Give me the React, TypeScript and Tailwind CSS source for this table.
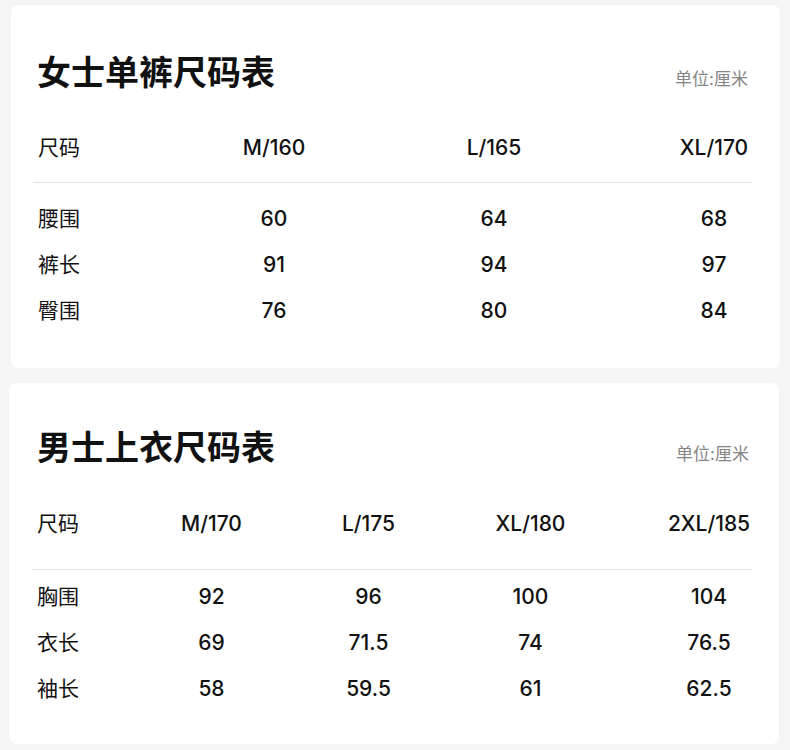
import React from "react";

const FONT = "font-['Inter','Noto_Sans_CJK_SC',sans-serif]";

function Card1() {
  const header = ["M/160", "L/165", "XL/170"];
  const rows: [string, string[]][] = [
    ["腰围", ["60", "64", "68"]],
    ["裤长", ["91", "94", "97"]],
    ["臀围", ["76", "80", "84"]],
  ];
  const grid = "grid grid-cols-[76px_120px_120px_120px] items-center gap-x-[100px] pl-[27px] text-[21px] text-[#111]";
  return (
    <div className="ml-[11px] w-[769px] rounded-[8px] bg-white pt-[48px] pb-[34px]">
      <div className="flex items-baseline justify-between pl-[26px] pr-[32px]">
        <div className="text-[34px] font-semibold leading-[40px] text-[#111]">女士单裤尺码表</div>
        <div className="text-[17px] leading-[24px] text-[#858585]">单位:厘米</div>
      </div>
      <div className={`mt-[33px] h-[44px] ${grid}`}>
        <div className="font-normal">尺码</div>
        {header.map((h) => (
          <div key={h} className="text-center font-medium">{h}</div>
        ))}
      </div>
      <div className="ml-[22px] mr-[28px] mt-[12px] h-px bg-[#e4e4e4]" />
      <div className="mt-[13px]">
        {rows.map(([label, vals]) => (
          <div key={label} className={`h-[46px] ${grid}`}>
            <div className="font-normal">{label}</div>
            {vals.map((v, i) => (
              <div key={i} className="text-center font-medium">{v}</div>
            ))}
          </div>
        ))}
      </div>
    </div>
  );
}

function Card2() {
  const header = ["M/170", "L/175", "XL/180", "2XL/185"];
  const rows: [string, string[]][] = [
    ["胸围", ["92", "96", "100", "104"]],
    ["衣长", ["69", "71.5", "74", "76.5"]],
    ["袖长", ["58", "59.5", "61", "62.5"]],
  ];
  const grid = "grid grid-cols-[51px_247px_67px_257px_100px] items-center pl-[28px] text-[21px] text-[#111]";
  return (
    <div className="ml-[9px] mt-[15px] w-[770px] rounded-[8px] bg-white pt-[45px] pb-[32px]">
      <div className="flex items-baseline justify-between pl-[28px] pr-[30px]">
        <div className="text-[34px] font-semibold leading-[40px] text-[#111]">男士上衣尺码表</div>
        <div className="text-[17px] leading-[24px] text-[#858585]">单位:厘米</div>
      </div>
      <div className={`mt-[34px] h-[44px] ${grid}`}>
        <div className="font-normal">尺码</div>
        {header.map((h) => (
          <div key={h} className="text-center font-medium">{h}</div>
        ))}
      </div>
      <div className="ml-[23px] mr-[27px] mt-[23px] h-px bg-[#e4e4e4]" />
      <div className="mt-[4px]">
        {rows.map(([label, vals]) => (
          <div key={label} className={`h-[46px] ${grid}`}>
            <div className="font-normal">{label}</div>
            {vals.map((v, i) => (
              <div key={i} className="text-center font-medium">{v}</div>
            ))}
          </div>
        ))}
      </div>
    </div>
  );
}

export default function App() {
  return (
    <div className={`${FONT} h-[750px] w-[790px] bg-[#f5f5f5] pt-[5px]`}>
      <Card1 />
      <Card2 />
    </div>
  );
}
